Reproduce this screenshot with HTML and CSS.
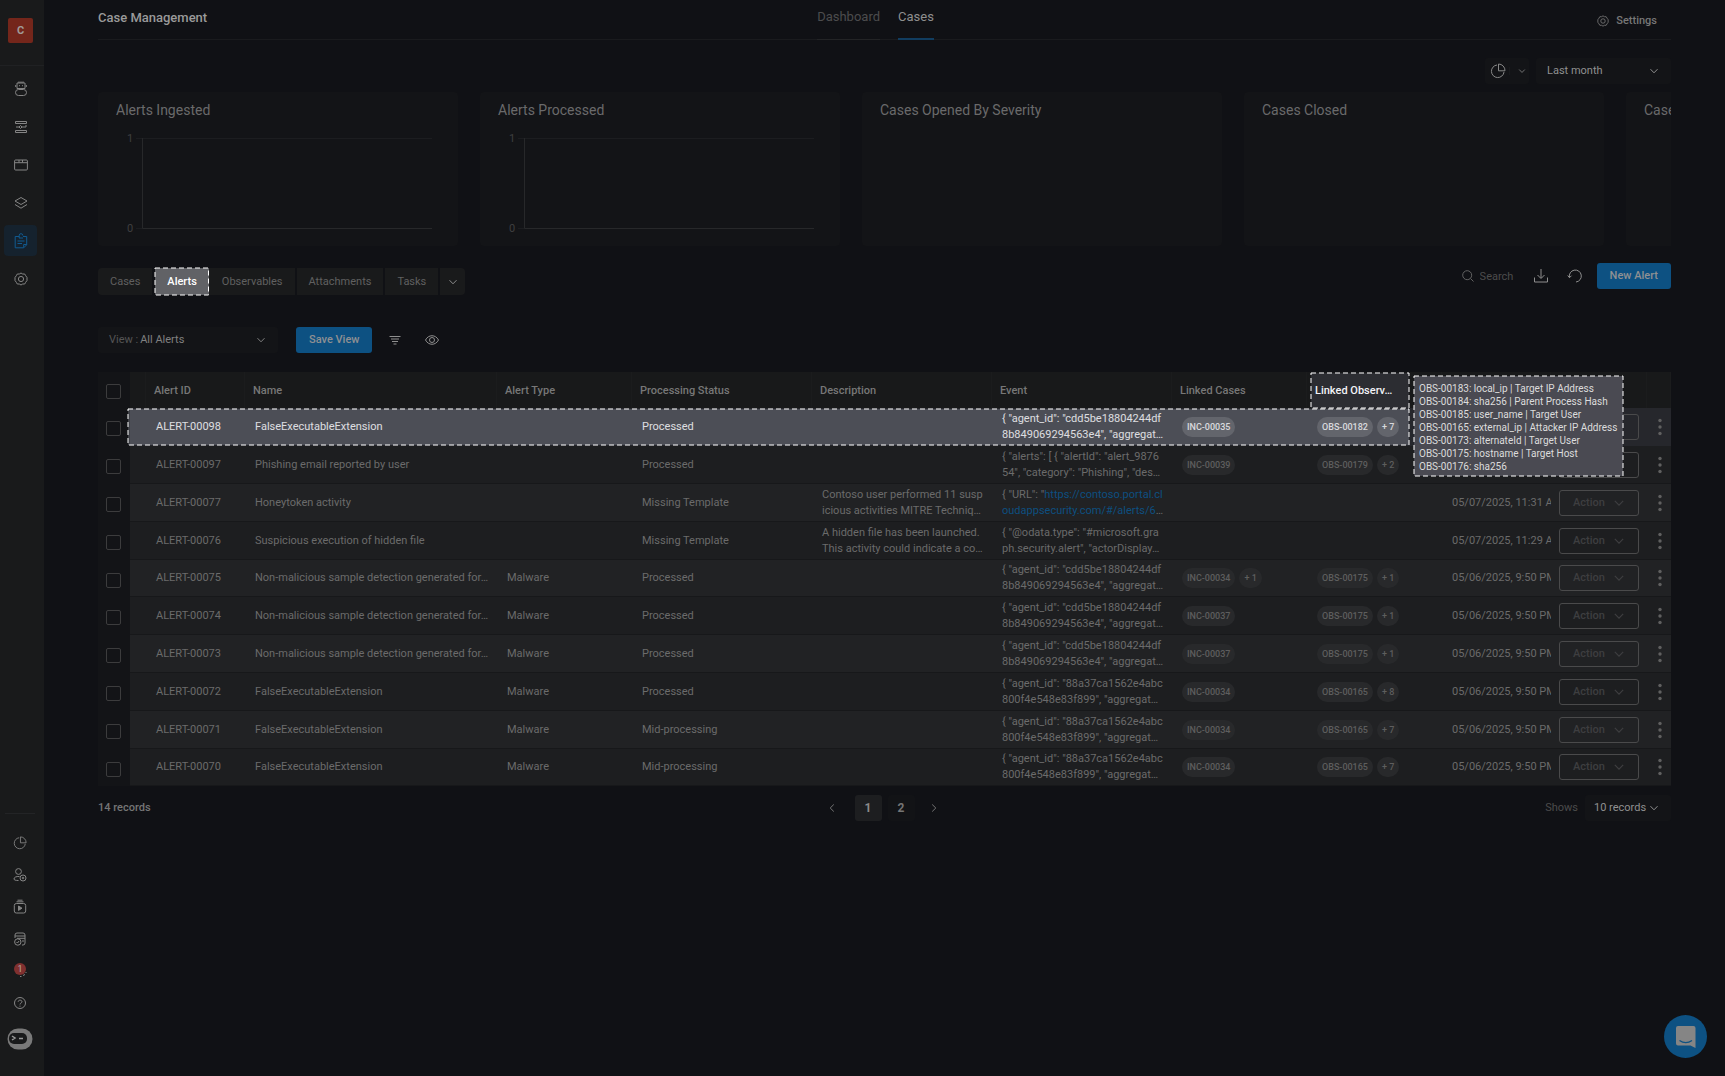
FILE: index.html
```html
<!DOCTYPE html>
<html lang="en">
<head>
<meta charset="utf-8">
<title>Case Management</title>
<link rel="stylesheet" href="styles.css">
</head>
<body>
<svg class="sprite" aria-hidden="true">
  <symbol id="chev" viewBox="0 0 10 10"><path d="M1.5 3.2 5 6.8l3.5-3.6"/></symbol>
  <symbol id="pie" viewBox="0 0 16 16"><path d="M7 2a6.300 6.300 0 1 0 7 7M8.500 1v6.800H15A6.600 6.600 0 0 0 8.500 1z"/></symbol>
  <symbol id="gear" viewBox="0 0 14 14"><path d="M7 1l1.700 1h2l1 1.700L13 5.500v3l-1.300 1.800-1 1.700h-2L7 13l-1.700-1h-2l-1-1.700L1 8.500v-3l1.300-1.800 1-1.700h2z"/><circle cx="7" cy="7" r="2.600"/></symbol>
  <symbol id="dots" viewBox="0 0 4 18"><circle cx="2" cy="2.500" r="1.700"/><circle cx="2" cy="9" r="1.700"/><circle cx="2" cy="15.500" r="1.700"/></symbol>
</svg>

<div class="app">
  <nav class="side" aria-label="Main">
    <div class="org"><button class="logo">C</button></div>
    <div class="side-top">
      <a href="#" aria-label="Agents"><svg viewBox="0 0 14 16"><path d="M4 1.200h6M3 2h8v5.500H3zM1.700 4v2M12.300 4v2"/><path d="M5 4.700h1M8 4.700h1"/><rect x="1.500" y="8.500" width="11" height="6" rx="3"/></svg></a>
      <a href="#" aria-label="Playbooks"><svg viewBox="0 0 14 16"><path d="M1.500 2.500h11v2h-11zM1.500 11.500h11v2h-11zM2 8h3l1.500-1.500L8 8l-1.500 1.500L5 8M8 8h4V6"/></svg></a>
      <a href="#" aria-label="Apps"><svg viewBox="0 0 14 16"><rect x=".6" y="3" width="12.800" height="10" rx="1"/><path d="M.6 5.700h12.800M5 3v2.500M8.500 3v2.500"/></svg></a>
      <a href="#" aria-label="Layers"><svg viewBox="0 0 14 16"><path d="M7 2.500l6 3.500-6 3.500L1 6zM1 9.500l6 3.700 6-3.700"/></svg></a>
      <a href="#" class="on" aria-label="Cases"><svg viewBox="0 0 14 16"><path d="M5 3.500H1.200v11.300h8.500l3-3V3.500H9M9.700 14.500v-3h3M5.200 5V2.500a1.800 1.800 0 0 1 3.600 0M5 5h4M3.500 8h7M3.500 10.500H8"/></svg></a>
      <a href="#" aria-label="Settings"><svg viewBox="0 0 14 14"><use href="#gear"/></svg></a>
    </div>
    <div class="side-bottom">
      <a href="#" aria-label="Reports"><svg viewBox="0 0 16 16"><use href="#pie"/></svg></a>
      <a href="#" aria-label="Users"><svg viewBox="0 0 14 16"><circle cx="5.500" cy="4.500" r="2.900"/><path d="M6.500 9.500C3 9.300 1 10.300 1 12c0 1 1.500 1.500 4.500 1.500"/><circle cx="10" cy="11" r="3"/><circle cx="10" cy="11" r=".8"/></svg></a>
      <a href="#" aria-label="Media"><svg viewBox="0 0 14 16"><rect x="1.300" y="4.500" width="11.400" height="9.500" rx="2"/><path d="M3.500 2.800h7M4.500 1.200h5"/><path class="solid" d="M5.500 7l3.500 2.200-3.500 2.200z"/></svg></a>
      <a href="#" aria-label="Audit"><svg viewBox="0 0 14 16"><path d="M2 7V4a2 2 0 0 1 2-2h6a2 2 0 0 1 2 2v8a2 2 0 0 1-2 2H9M2 5h10M4 7.300h8M9 10h2"/><circle cx="4.800" cy="11" r="3.200"/><path d="M3.500 11l1 1 1.600-2"/></svg></a>
      <a href="#" class="alerts" aria-label="Notifications"><span class="count">1</span><svg viewBox="0 0 14 16"><path d="M7 15.500h1.500M10 14.500l2-1M12.500 11.500h1"/></svg></a>
      <a href="#" aria-label="Help"><svg viewBox="0 0 14 14"><circle cx="7" cy="7" r="5.500"/><path d="M5.200 5.800C5.200 3.500 9 3.700 9 5.700 9 7 7 7 7 8.500M7 9.700v1"/></svg></a>
      <a href="#" class="bot" aria-label="Console"><svg viewBox="0 0 26 22"><rect class="bot-face" x=".5" y=".5" width="25" height="21" rx="10.500"/><rect class="bot-screen" x="2" y="5" width="18" height="11" rx="5"/><path class="bot-ink" d="M5 8l3 2-3 2M12 10.500h4"/></svg></a>
    </div>
  </nav>

  <main class="main">
    <header class="head">
      <h1>Case Management</h1>
      <nav class="pages"><a href="#">Dashboard</a><a href="#" class="on">Cases</a></nav>
      <a href="#" class="settings"><svg><use href="#gear"/></svg>Settings</a>
    </header>

    <div class="range">
      <button class="pie-btn" aria-label="Widgets"><svg class="pie"><use href="#pie"/></svg><svg class="chev"><use href="#chev"/></svg></button>
      <div class="pick month"><select aria-label="Period"><option>Last month</option></select><svg class="chev"><use href="#chev"/></svg></div>
    </div>

    <section class="cards">
      <article><h2>Alerts Ingested</h2>
        <svg class="chart" viewBox="0 0 324 110"><path class="grid" d="M20 16.500h296M20 106.500h6"/><path class="axis" d="M26.500 16v90.500H316"/><text x="11" y="20">1</text><text x="11" y="110">0</text></svg></article>
      <article><h2>Alerts Processed</h2>
        <svg class="chart" viewBox="0 0 324 110"><path class="grid" d="M20 16.500h296M20 106.500h6"/><path class="axis" d="M26.500 16v90.500H316"/><text x="11" y="20">1</text><text x="11" y="110">0</text></svg></article>
      <article><h2>Cases Opened By Severity</h2></article>
      <article><h2>Cases Closed</h2></article>
      <article><h2>Cases</h2></article>
    </section>

    <div class="bar">
      <div class="tabs">
        <button>Cases</button><button class="on">Alerts<svg class="dash"><rect x="0" y="0" width="100%" height="100%"/></svg></button><button>Observables</button><button>Attachments</button><button>Tasks</button><button class="more" aria-label="More"><svg class="chev"><use href="#chev"/></svg></button>
      </div>
      <div class="tools">
        <label class="search"><svg viewBox="0 0 12 12"><circle cx="5.200" cy="5.200" r="4.500"/><path d="M8.500 8.500l3 3"/></svg><input type="text" placeholder="Search" aria-label="Search"></label>
        <button class="icon" aria-label="Download"><svg viewBox="0 0 16 16"><path d="M1.500 9.500v4.500h13V9.500M8 1v9M4.500 7L8 10.500 11.500 7"/></svg></button>
        <button class="icon" aria-label="Refresh"><svg viewBox="0 0 16 16"><path d="M2.500 9.500A6 6 0 1 1 9 14M.7 7.500l1.800 2.200 2-2"/></svg></button>
        <button class="primary">New Alert</button>
      </div>
    </div>

    <div class="views">
      <div class="pick view"><label for="view">View :</label><select id="view"><option>All Alerts</option></select><svg class="chev"><use href="#chev"/></svg></div>
      <button class="primary">Save View</button>
      <button class="icon filter" aria-label="Filter"><svg viewBox="0 0 12 12"><path d="M.5 2.500h11M2 5h8M3 7.500h6M4.500 10h3"/></svg></button>
      <button class="icon" aria-label="Columns"><svg viewBox="0 0 16 12"><path d="M1.500 6C4.500.3 11.500.3 14.500 6 11.500 11.700 4.500 11.700 1.500 6z"/><circle cx="8" cy="6" r="2.500"/></svg></button>
    </div>

    <div class="grid-wrap">
      <table>
        <colgroup><col class="w-check"><col class="w-gap"><col class="w-id"><col><col class="w-type"><col class="w-wide"><col class="w-wide"><col class="w-wide"><col class="w-link"><col class="w-link"><col class="w-date"><col class="w-act"><col class="w-dots"></colgroup>
        <thead><tr><th class="check"><input type="checkbox" aria-label="Select all"></th><th></th><th>Alert ID</th><th>Name</th><th>Alert Type</th><th>Processing Status</th><th>Description</th><th>Event</th><th>Linked Cases</th><th class="lit">Linked Observ…</th><th></th><th></th><th></th></tr></thead>
        <tbody>
          <tr class="hot"><td class="check"><input type="checkbox" aria-label="Select ALERT-00098"></td><td></td><td>ALERT-00098</td><td>FalseExecutableExtension</td><td></td><td>Processed</td><td></td><td>{ "agent_id": "cdd5be18804244df<br>8b849069294563e4", "aggregat…</td><td><span class="tag">INC-00035</span></td><td><span class="tag">OBS-00182</span><span class="tag">+ 7</span></td><td></td><td><button class="act">Action<svg class="chev"><use href="#chev"/></svg></button></td><td><button class="dots" aria-label="More"><svg><use href="#dots"/></svg></button></td></tr>
          <tr><td class="check"><input type="checkbox" aria-label="Select ALERT-00097"></td><td></td><td>ALERT-00097</td><td>Phishing email reported by user</td><td></td><td>Processed</td><td></td><td>{ "alerts": [ { "alertId": "alert_9876<br>54", "category": "Phishing", "des…</td><td><span class="tag">INC-00039</span></td><td><span class="tag">OBS-00179</span><span class="tag">+ 2</span></td><td></td><td><button class="act">Action<svg class="chev"><use href="#chev"/></svg></button></td><td><button class="dots" aria-label="More"><svg><use href="#dots"/></svg></button></td></tr>
          <tr><td class="check"><input type="checkbox" aria-label="Select ALERT-00077"></td><td></td><td>ALERT-00077</td><td>Honeytoken activity</td><td></td><td>Missing Template</td><td>Contoso user performed 11 susp<br>icious activities MITRE Techniq…</td><td>{ "URL": "<a href="#">https://contoso.portal.cl<br>oudappsecurity.com/#/alerts/6</a>…</td><td></td><td></td><td>05/07/2025, 11:31 AM</td><td><button class="act">Action<svg class="chev"><use href="#chev"/></svg></button></td><td><button class="dots" aria-label="More"><svg><use href="#dots"/></svg></button></td></tr>
          <tr><td class="check"><input type="checkbox" aria-label="Select ALERT-00076"></td><td></td><td>ALERT-00076</td><td>Suspicious execution of hidden file</td><td></td><td>Missing Template</td><td>A hidden file has been launched.<br>This activity could indicate a co…</td><td>{ "@odata.type": "#microsoft.gra<br>ph.security.alert", "actorDisplay…</td><td></td><td></td><td>05/07/2025, 11:29 AM</td><td><button class="act">Action<svg class="chev"><use href="#chev"/></svg></button></td><td><button class="dots" aria-label="More"><svg><use href="#dots"/></svg></button></td></tr>
          <tr><td class="check"><input type="checkbox" aria-label="Select ALERT-00075"></td><td></td><td>ALERT-00075</td><td>Non-malicious sample detection generated for…</td><td>Malware</td><td>Processed</td><td></td><td>{ "agent_id": "cdd5be18804244df<br>8b849069294563e4", "aggregat…</td><td><span class="tag">INC-00034</span><span class="tag">+ 1</span></td><td><span class="tag">OBS-00175</span><span class="tag">+ 1</span></td><td>05/06/2025, 9:50 PM</td><td><button class="act">Action<svg class="chev"><use href="#chev"/></svg></button></td><td><button class="dots" aria-label="More"><svg><use href="#dots"/></svg></button></td></tr>
          <tr><td class="check"><input type="checkbox" aria-label="Select ALERT-00074"></td><td></td><td>ALERT-00074</td><td>Non-malicious sample detection generated for…</td><td>Malware</td><td>Processed</td><td></td><td>{ "agent_id": "cdd5be18804244df<br>8b849069294563e4", "aggregat…</td><td><span class="tag">INC-00037</span></td><td><span class="tag">OBS-00175</span><span class="tag">+ 1</span></td><td>05/06/2025, 9:50 PM</td><td><button class="act">Action<svg class="chev"><use href="#chev"/></svg></button></td><td><button class="dots" aria-label="More"><svg><use href="#dots"/></svg></button></td></tr>
          <tr><td class="check"><input type="checkbox" aria-label="Select ALERT-00073"></td><td></td><td>ALERT-00073</td><td>Non-malicious sample detection generated for…</td><td>Malware</td><td>Processed</td><td></td><td>{ "agent_id": "cdd5be18804244df<br>8b849069294563e4", "aggregat…</td><td><span class="tag">INC-00037</span></td><td><span class="tag">OBS-00175</span><span class="tag">+ 1</span></td><td>05/06/2025, 9:50 PM</td><td><button class="act">Action<svg class="chev"><use href="#chev"/></svg></button></td><td><button class="dots" aria-label="More"><svg><use href="#dots"/></svg></button></td></tr>
          <tr><td class="check"><input type="checkbox" aria-label="Select ALERT-00072"></td><td></td><td>ALERT-00072</td><td>FalseExecutableExtension</td><td>Malware</td><td>Processed</td><td></td><td>{ "agent_id": "88a37ca1562e4abc<br>800f4e548e83f899", "aggregat…</td><td><span class="tag">INC-00034</span></td><td><span class="tag">OBS-00165</span><span class="tag">+ 8</span></td><td>05/06/2025, 9:50 PM</td><td><button class="act">Action<svg class="chev"><use href="#chev"/></svg></button></td><td><button class="dots" aria-label="More"><svg><use href="#dots"/></svg></button></td></tr>
          <tr><td class="check"><input type="checkbox" aria-label="Select ALERT-00071"></td><td></td><td>ALERT-00071</td><td>FalseExecutableExtension</td><td>Malware</td><td>Mid-processing</td><td></td><td>{ "agent_id": "88a37ca1562e4abc<br>800f4e548e83f899", "aggregat…</td><td><span class="tag">INC-00034</span></td><td><span class="tag">OBS-00165</span><span class="tag">+ 7</span></td><td>05/06/2025, 9:50 PM</td><td><button class="act">Action<svg class="chev"><use href="#chev"/></svg></button></td><td><button class="dots" aria-label="More"><svg><use href="#dots"/></svg></button></td></tr>
          <tr><td class="check"><input type="checkbox" aria-label="Select ALERT-00070"></td><td></td><td>ALERT-00070</td><td>FalseExecutableExtension</td><td>Malware</td><td>Mid-processing</td><td></td><td>{ "agent_id": "88a37ca1562e4abc<br>800f4e548e83f899", "aggregat…</td><td><span class="tag">INC-00034</span></td><td><span class="tag">OBS-00165</span><span class="tag">+ 7</span></td><td>05/06/2025, 9:50 PM</td><td><button class="act">Action<svg class="chev"><use href="#chev"/></svg></button></td><td><button class="dots" aria-label="More"><svg><use href="#dots"/></svg></button></td></tr>
        </tbody>
      </table>
      <div class="frame frame-row"><svg class="dash"><rect width="100%" height="100%"/></svg></div>
      <div class="frame frame-head"><svg class="dash"><rect width="100%" height="100%"/></svg></div>
      <div class="tip" role="tooltip"><svg class="dash"><rect width="100%" height="100%"/></svg>
        <div>OBS-00183: local_ip | Target IP Address</div>
        <div>OBS-00184: sha256 | Parent Process Hash</div>
        <div>OBS-00185: user_name | Target User</div>
        <div>OBS-00165: external_ip | Attacker IP Address</div>
        <div>OBS-00173: alternateId | Target User</div>
        <div>OBS-00175: hostname | Target Host</div>
        <div>OBS-00176: sha256</div>
      </div>
    </div>

    <footer class="foot">
      <span class="total">14 records</span>
      <div class="pager">
        <button aria-label="Previous"><svg class="chev prev"><use href="#chev"/></svg></button><button class="on">1</button><button class="num">2</button><button aria-label="Next"><svg class="chev next"><use href="#chev"/></svg></button>
      </div>
      <div class="shows"><label for="size">Shows</label><div class="pick size"><select id="size"><option>10 records</option></select><svg class="chev"><use href="#chev"/></svg></div></div>
    </footer>
  </main>
</div>

<button class="chat" aria-label="Chat"><svg viewBox="0 0 20 22"><path class="bubble" d="M2 0h15.500a2 2 0 0 1 2 2v20l-5-2.500H2a2 2 0 0 1-2-2V2a2 2 0 0 1 2-2z"/><path class="smile" d="M3.500 14.500c4 2.700 8.500 2.700 12.500 0"/></svg></button>
</body>
</html>
```
FILE: styles.css
```css
* { box-sizing: border-box; }
body {
  margin: 0;
  background: #101115;
  color: #757575;
  font: 11px/16px Roboto, "Liberation Sans", sans-serif;
}
button, input, select {
  font: inherit;
  color: inherit;
  background: none;
  border: 0;
  padding: 0;
  margin: 0;
  appearance: none;
  outline: 0;
}
a { color: inherit; text-decoration: none; }
svg { display: block; fill: none; stroke: currentColor; flex: none; }
.sprite { position: absolute; width: 0; height: 0; }
.chev { width: 10px; height: 10px; }
.app { display: flex; min-height: 100vh; }

/* sidebar */
.side {
  width: 44px;
  flex: none;
  background: #191a1b;
  display: flex;
  flex-direction: column;
  color: #858585;
}
.org { height: 66px; padding: 18px 0 0 8px; border-bottom: 1px solid #202123; }
.logo {
  width: 25px;
  height: 25px;
  border-radius: 2px;
  background: #74261b;
  color: #a09a98;
  font-weight: 700;
}
.side-top { display: flex; flex-direction: column; gap: 7px; padding: 7px 0 0 4px; }
.side-top a {
  width: 33px;
  height: 31px;
  border-radius: 4px;
  display: grid;
  place-items: center;
}
.side-top a.on { background: #15222e; color: #115a90; }
.side-top svg, .side-bottom svg { width: 14px; height: 16px; }
.side-bottom {
  margin: auto 9px 21px 5px;
  border-top: 1px solid #232426;
  padding-top: 13px;
  display: flex;
  flex-direction: column;
}
.side-bottom a { height: 32px; display: grid; place-items: center; }
.side-bottom .solid { fill: currentColor; }
.side-bottom .alerts { height: 28px; }
.side-bottom .alerts > * { grid-area: 1 / 1; }
.side-bottom .alerts + a { height: 40px; }
.count {
  width: 12px;
  height: 12px;
  border-radius: 50%;
  background: #80302f;
  color: #b5a5a5;
  font-size: 9px;
  line-height: 12px;
  text-align: center;
}
.side-bottom .bot svg { width: 26px; height: 22px; }
.bot-face { fill: #797979; stroke: none; }
.bot-screen { fill: #191a1b; stroke: none; }
.bot-ink { stroke: #999; stroke-width: 1.5; }

/* page head */
.main { flex: 1; min-width: 0; padding: 0 54px 40px; }
.head {
  height: 40px;
  border-bottom: 1px solid #1a1b1e;
  display: grid;
  grid-template-columns: 1fr auto 1fr;
}
.head h1 { margin: 0; font-size: 13px; line-height: 35px; font-weight: 500; color: #9a9a9a; }
.pages { display: flex; gap: 18px; padding-right: 18px; }
.pages a { font-size: 13px; line-height: 34px; height: 40px; color: #4c4c4d; border-bottom: 1px solid #232426; }
.pages a.on { color: #8f8f8f; border-bottom: 2px solid #113d60; }
.settings {
  justify-self: end;
  display: flex;
  align-items: center;
  gap: 7px;
  height: 41px;
  padding-right: 14px;
  font-weight: 500;
  color: #777;
}
.settings svg { width: 12px; height: 12px; }

/* pickers */
.pick { position: relative; display: flex; align-items: center; background: #131417; border-radius: 3px; height: 26px; color: #909090; }
.pick select { flex: 1; min-width: 0; height: 26px; }
.pick .chev { position: absolute; right: 12px; pointer-events: none; }
.range { display: flex; justify-content: flex-end; gap: 7px; margin: 18px 0 8px; }
.pie-btn { display: flex; align-items: center; width: 44px; height: 26px; background: #131417; border-radius: 3px; color: #888; padding-left: 5px; gap: 3px; }
.pie-btn .chev { width: 19px; height: 8px; padding-left: 6px; border-left: 1px solid #191a1d; overflow: visible; }
.pie { width: 16px; height: 16px; }
.month { width: 135px; padding-left: 11px; }

/* cards */
.cards { display: flex; gap: 22px; overflow: hidden; }
.cards article { flex: 0 0 360px; height: 154px; background: #131417; border-radius: 4px; padding: 10px 18px; }
.cards h2 { margin: 0; font-size: 14px; line-height: 16px; font-weight: 400; color: #6a6a6b; white-space: nowrap; }
.chart { width: 324px; height: 110px; margin-top: 4px; }
.chart .grid { stroke: #1c1d20; }
.chart .axis { stroke: #27282a; }
.chart text { fill: #3f3f40; stroke: none; font-size: 11px; }

/* tabs and tools */
.bar { display: flex; justify-content: space-between; align-items: flex-start; margin-top: 17px; }
.tabs { display: flex; gap: 2px; margin-top: 5px; }
.tabs button { position: relative; height: 27px; padding: 0 12px; background: #191a1b; color: #606060; }
.tabs button:first-child { border-radius: 4px 0 0 4px; }
.tabs button.on { margin: 0 -2px 0 1px; padding: 0 12px; background: #616266; color: #fff; font-weight: 500; }
.tabs .on + button { padding-left: 13px; }
.tabs .more { width: 25px; padding: 0 8px; border-radius: 0 4px 4px 0; color: #8c8c8c; }
.dash { position: absolute; inset: 0; width: 100%; height: 100%; overflow: visible; stroke: #fff; stroke-width: 1; stroke-dasharray: 5 3; pointer-events: none; }
.tools { display: flex; align-items: center; }
.search { display: flex; align-items: center; gap: 6px; margin-right: 12px; color: #626262; }
.search svg { width: 12px; height: 12px; }
.search input { width: 41px; height: 25px; }
.search input::placeholder { color: #4c4c4c; opacity: 1; }
.icon { color: #8f8f8f; }
.icon svg { width: 16px; height: 16px; }
.tools .icon { margin-right: 18px; }
.tools .icon + .icon { margin-right: 14px; }
.primary { height: 26px; padding: 0 13px; border-radius: 3px; background: #0d5182; color: #8f9093; font-weight: 500; }
.views { display: flex; align-items: center; margin: 32px 0 19px; }
.view { width: 180px; padding-left: 11px; gap: 2px; margin-right: 18px; color: #808080; }
.view label { color: #555; }
.filter { margin: 0 23px 0 17px; }
.filter svg { width: 12px; height: 12px; }

/* table */
.grid-wrap { position: relative; }
table { width: 100%; table-layout: fixed; border-collapse: separate; border-spacing: 0; }
.w-check { width: 32px; }
.w-gap { width: 16px; }
.w-id { width: 99px; }
.w-type { width: 135px; }
.w-wide { width: 180px; }
.w-link { width: 135px; }
.w-date { width: 109px; }
.w-act { width: 96px; }
.w-dots { width: 24px; }
th { height: 36px; padding: 2px 8px 0; text-align: left; font-weight: 500; color: #777; background: #18191a; border-right: 1px solid #1b1c1d; white-space: nowrap; }
th.lit { color: #fff; }
td { height: 38px; padding: 0 0 0 10px; background: #1d1e20; border-bottom: 1px solid #17181a; white-space: nowrap; overflow: hidden; color: #6b6b6b; }
tr:nth-child(odd) td { background: #212224; }
tr:nth-child(5n) td { height: 37px; }
tr .check, tr:nth-child(odd) td.check { background: #131417; border: 0; padding: 3px 0 0 8px; }
tr.hot td:not(.check) { background: #26272c; border-color: #26272c; color: #e6e6e6; }
td a { color: #0d4f80; }
.check input { display: block; width: 15px; height: 15px; border: 1px solid #3c3c3d; border-radius: 2px; }
.tag { display: inline-block; height: 20px; line-height: 20px; padding: 0 5px; border-radius: 10px; background: #28292b; color: #5e5e5e; font-size: 9px; font-weight: 500; margin-right: 4px; vertical-align: middle; }
.hot .tag { background: #45464a; color: #e0e0e0; }
.act { display: flex; align-items: center; justify-content: center; gap: 8px; width: 80px; height: 26px; border: 1px solid #4a4a4b; border-radius: 3px; color: #3e3e40; font-weight: 500; margin-left: -2px; }
.act .chev { width: 12px; height: 12px; }
.dots { display: block; margin-left: 1px; }
.dots svg { width: 4px; height: 18px; fill: #606060; stroke: none; }
.frame { position: absolute; pointer-events: none; }
.frame-row { left: 30px; right: 262px; top: 37px; height: 36px; background: rgba(190, 195, 210, .25); }
.frame-head { right: 262px; width: 98px; top: 1px; height: 35px; background: rgba(170, 170, 200, .14); }
.tip { position: absolute; right: 48px; top: 4px; width: 209px; padding: 6px 0 3px 5px; background: #4a4a52; color: #dcdcdc; font-size: 10px; line-height: 13px; white-space: nowrap; }

/* footer */
.foot { display: grid; grid-template-columns: 1fr auto 1fr; align-items: center; margin-top: 9px; }
.total { font-weight: 500; }
.pager { display: flex; align-items: center; gap: 6px; font-size: 12px; font-weight: 700; }
.pager button { width: 27px; height: 26px; display: grid; place-items: center; border-radius: 3px; }
.pager button:first-child { margin: 0 3px 0 -3px; }
.pager .on { background: #1d1e20; color: #8a8a8a; }
.pager .num { background: #121316; }
.prev { transform: rotate(90deg); }
.next { transform: rotate(-90deg); }
.shows { justify-self: end; display: flex; align-items: center; gap: 7px; }
.shows label { color: #4c4c4c; }
.size { width: 86px; padding-left: 9px; }

.chat { position: fixed; right: 18px; bottom: 18px; width: 43px; height: 43px; border-radius: 50%; background: #0d5182; display: grid; place-items: center; }
.chat svg { width: 20px; height: 22px; }
.bubble { fill: #858585; stroke: none; }
.smile { stroke: #0d5182; stroke-width: 1.3; }
```
